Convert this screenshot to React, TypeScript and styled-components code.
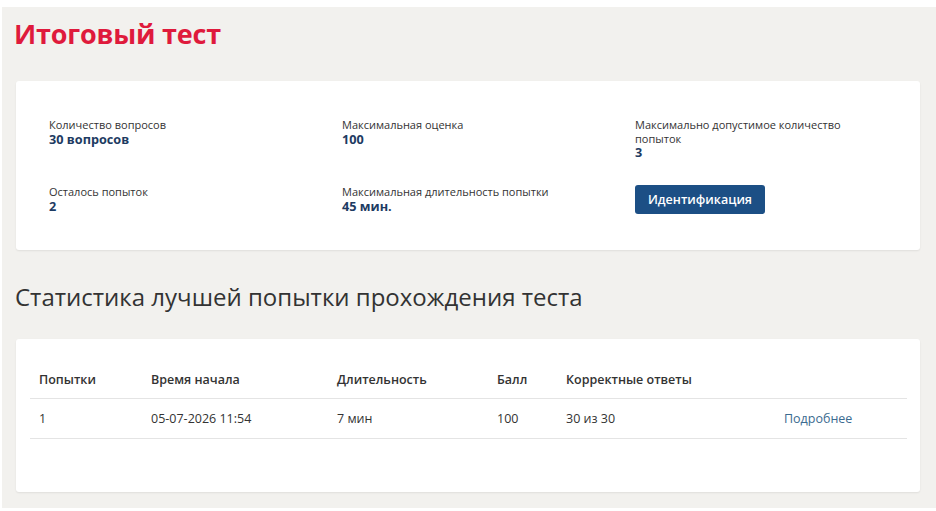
import React from "react";
import styled, { createGlobalStyle } from "styled-components";

const Global = createGlobalStyle`
  html, body { margin: 0; padding: 0; background: #ffffff; }
  body { font-family: "Open Sans", "Noto Sans", Arial, sans-serif; color: #333333; }
  * { box-sizing: border-box; }
`;

const Page = styled.div`
  margin: 7px 0 0 2px;
  height: 501px;
  background: #f2f1ee;
  padding: 9px 16px 16px 14px;
  display: flex;
  flex-direction: column;
`;

const Title = styled.h1`
  margin: 0 0 0 -2px;
  font-family: "Open Sans", Arial, sans-serif;
  font-weight: 700;
  font-size: 27px;
  line-height: 36px;
  color: #df1a3c;
  letter-spacing: -0.2px;
`;

const Card = styled.section<{ $top: number; $pad: string }>`
  margin-top: ${(p) => p.$top}px;
  background: #ffffff;
  border-radius: 3px;
  box-shadow: 0 1px 2px rgba(0, 0, 0, 0.08);
  padding: ${(p) => p.$pad};
`;

const InfoGrid = styled.div`
  display: grid;
  grid-template-columns: 293px 293px 1fr;
  row-gap: 25px;
`;

const Field = styled.div`
  display: flex;
  flex-direction: column;
  align-items: flex-start;
`;

const Label = styled.div`
  font-size: 11px;
  line-height: 13.5px;
  color: #333333;
  max-width: 215px;
`;

const Value = styled.div`
  font-size: 12.7px;
  line-height: 15px;
  font-weight: 700;
  color: #1d3b62;
`;

const Button = styled.button`
  font-family: "Open Sans", Arial, sans-serif;
  background: #1c4f85;
  color: #ffffff;
  border: none;
  border-radius: 3px;
  height: 29px;
  width: 130px;
  font-size: 12.5px;
  font-weight: 600;
  cursor: pointer;
  padding: 0;
`;

const Heading = styled.h2`
  margin: 32px 0 0 -1px;
  font-family: "Open Sans", Arial, sans-serif;
  font-weight: 400;
  font-size: 24px;
  line-height: 30px;
  color: #333333;
`;

const Table = styled.table`
  width: 100%;
  border-collapse: collapse;
  table-layout: fixed;
`;

const Th = styled.th`
  text-align: left;
  font-size: 12.5px;
  font-weight: 600;
  color: #333333;
  padding: 8px 9px 8px;
  line-height: 20px;
  border-bottom: 1px solid #e4e4e4;
`;

const Td = styled.td<{ $link?: boolean }>`
  font-size: 12.5px;
  color: ${(p) => (p.$link ? "#3b6b90" : "#333333")};
  padding: 10px 9px 10px;
  line-height: 19px;
  border-bottom: 1px solid #e4e4e4;
`;

const info = [
  { label: "Количество вопросов", value: "30 вопросов" },
  { label: "Максимальная оценка", value: "100" },
  { label: "Максимально допустимое количество попыток", value: "3" },
  { label: "Осталось попыток", value: "2" },
  { label: "Максимальная длительность попытки", value: "45 мин." },
];

const cols = [112, 186, 160, 69, 218, 132];

export default function App() {
  return (
    <>
      <Global />
      <Page>
        <Title>Итоговый тест</Title>
        <Card $top={29} $pad="37px 20px 36px 33px">
          <InfoGrid>
            {info.map((f) => (
              <Field key={f.label}>
                <Label>{f.label}</Label>
                <Value>{f.value}</Value>
              </Field>
            ))}
            <Field>
              <Button>Идентификация</Button>
            </Field>
          </InfoGrid>
        </Card>
        <Heading>Статистика лучшей попытки прохождения теста</Heading>
        <Card $top={27} $pad="23px 13px 53px 14px">
          <Table>
            <colgroup>
              {cols.map((w, i) => (
                <col key={i} style={{ width: w }} />
              ))}
            </colgroup>
            <thead>
              <tr>
                <Th>Попытки</Th>
                <Th>Время начала</Th>
                <Th>Длительность</Th>
                <Th>Балл</Th>
                <Th>Корректные ответы</Th>
                <Th />
              </tr>
            </thead>
            <tbody>
              <tr>
                <Td>1</Td>
                <Td>05-07-2026 11:54</Td>
                <Td>7 мин</Td>
                <Td>100</Td>
                <Td>30 из 30</Td>
                <Td $link>Подробнее</Td>
              </tr>
            </tbody>
          </Table>
        </Card>
      </Page>
    </>
  );
}
